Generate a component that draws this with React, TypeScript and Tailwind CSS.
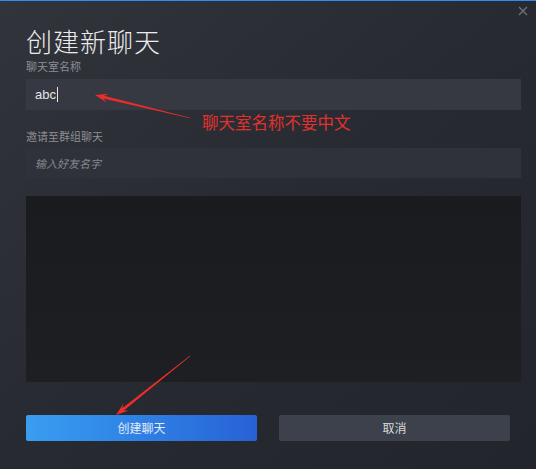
import React from "react";

const cjk = { fontFamily: '"Noto Sans CJK SC", "Noto Sans", sans-serif' };

// tapered annotation arrow, from tail to tip
function arrowPoints(tx: number, ty: number, hx: number, hy: number) {
  const dx = hx - tx;
  const dy = hy - ty;
  const len = Math.hypot(dx, dy);
  const ux = dx / len;
  const uy = dy / len;
  const nx = -uy;
  const ny = ux;
  const headLen = 13;
  const headW = 4.5;
  const bx = hx - ux * headLen;
  const by = hy - uy * headLen;
  const neckX = hx - ux * (headLen - 4);
  const neckY = hy - uy * (headLen - 4);
  const shaft = [
    [tx + nx * 0.3, ty + ny * 0.3],
    [neckX + nx * 1.4, neckY + ny * 1.4],
    [bx + nx * headW, by + ny * headW],
    [hx, hy],
    [bx - nx * headW, by - ny * headW],
    [neckX - nx * 1.4, neckY - ny * 1.4],
    [tx - nx * 0.3, ty - ny * 0.3],
  ];
  return shaft.map((p) => p.map((v) => v.toFixed(1)).join(",")).join(" ");
}

export default function App() {
  return (
    <div
      className="relative w-[536px] h-[469px] overflow-hidden border-t border-[#2f8cf0] bg-gradient-to-br from-[#31343b] via-[#272a31] to-[#22252b] pl-[26px] pr-[15px]"
      style={cjk}
    >
      {/* close */}
      <svg className="absolute top-[5px] right-[8px]" width="10" height="10" viewBox="0 0 10 10">
        <path d="M1 1 L9 9 M9 1 L1 9" stroke="#6a7580" strokeWidth="1.3" />
      </svg>

      <h1 className="mt-[27px] text-[26px] leading-[26px] tracking-[1px] text-[#ececec] font-light">
        创建新聊天
      </h1>

      <div className="mt-[7px] text-[11px] leading-[11px] text-[#8b8e94]">聊天室名称</div>
      <div className="mt-[7px] h-[31px] bg-[#363941] flex items-center pl-[9px]">
        <span className="text-[13px] text-[#e4e6e8]" style={{ fontFamily: '"Liberation Sans", sans-serif' }}>
          abc
        </span>
        <span className="ml-[1px] w-px h-[15px] bg-[#e4e6e8]" />
      </div>

      <div className="mt-[21px] text-[11px] leading-[11px] text-[#8b8e94]">邀请至群组聊天</div>
      <div className="mt-[6px] h-[30px] bg-[#2f323a] flex items-center pl-[9px]">
        <span className="italic text-[11px] text-[#85888e]">输入好友名字</span>
      </div>

      <div className="mt-[18px] h-[186px] bg-gradient-to-b from-[#1a1b1f] to-[#1d1f23]" />

      <div className="mt-[33px] flex gap-[22px] w-[484px]">
        <button className="w-[231px] h-[26px] rounded-[2px] bg-gradient-to-r from-[#3a9ef1] to-[#2861d6] text-[12px] text-[#e3ebf5]">
          创建聊天
        </button>
        <button className="w-[231px] h-[26px] rounded-[2px] bg-[#3c414b] text-[12px] text-[#d6d9de]">
          取消
        </button>
      </div>

      {/* annotation */}
      <div className="absolute left-[202px] top-[112px] text-[16.5px] leading-[18px] text-[#e2312c]">
        聊天室名称不要中文
      </div>
      <svg className="absolute inset-0 pointer-events-none" width="536" height="469">
        <polygon points={arrowPoints(190, 117, 95, 94)} fill="#ee2d2a" />
        <polygon points={arrowPoints(190, 355, 116, 414)} fill="#ee2d2a" />
      </svg>
    </div>
  );
}
